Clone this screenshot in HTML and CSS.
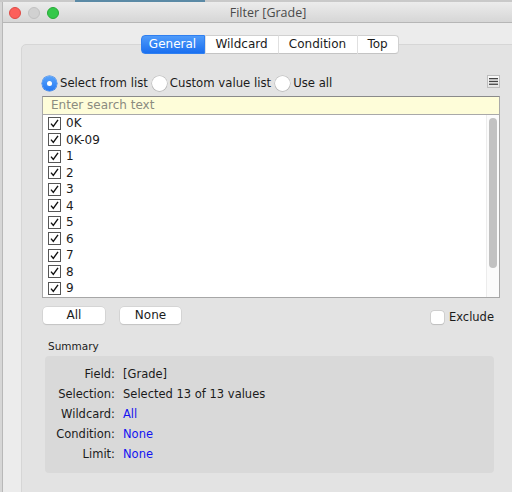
FILE: index.html
```html
<!DOCTYPE html>
<html>
<head>
<meta charset="utf-8">
<link rel="stylesheet" href="styles.css">
</head>
<body>
<div class="topstrip"><div class="peek"></div></div>
<div class="window">
  <div class="titlebar">
    <div class="lights">
      <span class="light red"></span>
      <span class="light gray"></span>
      <span class="light green"></span>
    </div>
    <div class="title">Filter [Grade]</div>
  </div>
  <div class="content">
    <div class="tabs">
      <div class="tab active t-general">General</div>
      <div class="tab t-wild">Wildcard</div>
      <div class="tab t-cond">Condition</div>
      <div class="tab t-top">Top</div>
    </div>
    <div class="panel">
      <div class="radiorow">
        <label class="radio"><span class="dot on"></span>Select from list</label>
        <label class="radio"><span class="dot"></span>Custom value list</label>
        <label class="radio"><span class="dot"></span>Use all</label>
        <span class="menu"><svg width="9" height="7" viewBox="0 0 9 7"><rect x="0" y="0" width="9" height="1.3" fill="#444"/><rect x="0" y="2.8" width="9" height="1.3" fill="#444"/><rect x="0" y="5.6" width="9" height="1.3" fill="#444"/></svg></span>
      </div>
      <div class="search">Enter search text</div>
      <div class="list">
        <div class="items">
          <div class="item"><span class="cb"><svg width="11" height="11" viewBox="0 0 11 11"><path d="M2 5.6 L4.3 8.4 L9 1.8" fill="none" stroke="#111" stroke-width="1.4"/></svg></span>0K</div>
          <div class="item"><span class="cb"><svg width="11" height="11" viewBox="0 0 11 11"><path d="M2 5.6 L4.3 8.4 L9 1.8" fill="none" stroke="#111" stroke-width="1.4"/></svg></span>0K-09</div>
          <div class="item"><span class="cb"><svg width="11" height="11" viewBox="0 0 11 11"><path d="M2 5.6 L4.3 8.4 L9 1.8" fill="none" stroke="#111" stroke-width="1.4"/></svg></span>1</div>
          <div class="item"><span class="cb"><svg width="11" height="11" viewBox="0 0 11 11"><path d="M2 5.6 L4.3 8.4 L9 1.8" fill="none" stroke="#111" stroke-width="1.4"/></svg></span>2</div>
          <div class="item"><span class="cb"><svg width="11" height="11" viewBox="0 0 11 11"><path d="M2 5.6 L4.3 8.4 L9 1.8" fill="none" stroke="#111" stroke-width="1.4"/></svg></span>3</div>
          <div class="item"><span class="cb"><svg width="11" height="11" viewBox="0 0 11 11"><path d="M2 5.6 L4.3 8.4 L9 1.8" fill="none" stroke="#111" stroke-width="1.4"/></svg></span>4</div>
          <div class="item"><span class="cb"><svg width="11" height="11" viewBox="0 0 11 11"><path d="M2 5.6 L4.3 8.4 L9 1.8" fill="none" stroke="#111" stroke-width="1.4"/></svg></span>5</div>
          <div class="item"><span class="cb"><svg width="11" height="11" viewBox="0 0 11 11"><path d="M2 5.6 L4.3 8.4 L9 1.8" fill="none" stroke="#111" stroke-width="1.4"/></svg></span>6</div>
          <div class="item"><span class="cb"><svg width="11" height="11" viewBox="0 0 11 11"><path d="M2 5.6 L4.3 8.4 L9 1.8" fill="none" stroke="#111" stroke-width="1.4"/></svg></span>7</div>
          <div class="item"><span class="cb"><svg width="11" height="11" viewBox="0 0 11 11"><path d="M2 5.6 L4.3 8.4 L9 1.8" fill="none" stroke="#111" stroke-width="1.4"/></svg></span>8</div>
          <div class="item"><span class="cb"><svg width="11" height="11" viewBox="0 0 11 11"><path d="M2 5.6 L4.3 8.4 L9 1.8" fill="none" stroke="#111" stroke-width="1.4"/></svg></span>9</div>
        </div>
        <div class="track"><div class="thumb"></div></div>
      </div>
      <div class="btnrow">
        <div class="btn b-all">All</div>
        <div class="btn b-none">None</div>
        <div class="spacer"></div>
        <label class="exclude"><span class="cb2"></span>Exclude</label>
      </div>
      <div class="sumlabel">Summary</div>
      <div class="summary">
        <div class="k">Field:</div><div class="v">[Grade]</div>
        <div class="k">Selection:</div><div class="v">Selected 13 of 13 values</div>
        <div class="k">Wildcard:</div><div class="v link">All</div>
        <div class="k">Condition:</div><div class="v link">None</div>
        <div class="k">Limit:</div><div class="v link">None</div>
      </div>
    </div>
  </div>
</div>
</body>
</html>
```
FILE: styles.css
```css
html, body {
  margin: 0;
  padding: 0;
  width: 512px;
  height: 492px;
  overflow: hidden;
}
body {
  background: #d6d6d6;
  font-family: "DejaVu Sans", "Liberation Sans", sans-serif;
  font-size: 12px;
  color: #1b1b1b;
}
.topstrip {
  height: 2px;
  background: #c9c9c9;
}
.peek {
  margin-left: 75px;
  width: 130px;
  height: 2px;
  background: #5b8aa6;
}
.window {
  margin-left: 3px;
  width: 530px;
  height: 490px;
  background: #ececec;
  box-shadow: -1px 0 0 #b8b8b8;
}
.titlebar {
  height: 20px;
  background: linear-gradient(#ececec, #d6d6d6);
  border-bottom: 1px solid #b6b6b6;
  display: flex;
  align-items: center;
  position: relative;
}
.lights {
  display: flex;
  gap: 7px;
  padding-left: 6px;
  padding-top: 1px;
}
.light {
  width: 12px;
  height: 12px;
  border-radius: 50%;
  box-sizing: border-box;
}
.red { background: #fc605b; border: 1px solid #de4a45; }
.gray { background: #d1d1d1; border: 1px solid #c1c1c1; }
.green { background: #34c84a; border: 1px solid #27aa36; }
.title {
  position: absolute;
  left: 0;
  right: 0;
  top: 1px;
  text-align: center;
  font-family: "Open Sans", "Liberation Sans", sans-serif;
  font-size: 12.5px;
  color: #4a4a4a;
  line-height: 20px;
}
.content {
  padding: 12px 15px 0 18px;
}
.tabs {
  display: flex;
  justify-content: center;
  position: relative;
  z-index: 1;
  height: 19px;
  margin-bottom: -10px;
}
.tab {
  background: #ffffff;
  border-top: 1px solid #d0d0d0;
  border-bottom: 1px solid #c4c4c4;
  border-left: 1px solid #e0e0e0;
  box-sizing: border-box;
  height: 19px;
  line-height: 17px;
  text-align: center;
  font-size: 12px;
  color: #1b1b1b;
}
.tab.active {
  background: linear-gradient(#4f9bfa, #1a6ff0);
  color: #fff;
  border: 1px solid #2f7ff0;
  border-radius: 4px 0 0 4px;
}
.t-general { width: 64px; }
.t-wild { width: 73px; }
.t-cond { width: 79px; }
.t-top { width: 42px; border-right: 1px solid #d0d0d0; border-radius: 0 4px 4px 0; }
.panel {
  background: #e3e3e3;
  border: 1px solid #d6d6d6;
  border-radius: 5px;
  height: 460px;
  padding: 21px 17px 0 20px;
  box-sizing: border-box;
}
.radiorow {
  display: flex;
  align-items: center;
  height: 16px;
  margin-top: 9px;
  font-size: 11.7px;
}
.radio {
  display: flex;
  align-items: center;
  margin-right: 4px;
  white-space: nowrap;
}
.dot {
  width: 15px;
  height: 15px;
  border-radius: 50%;
  background: #fff;
  box-shadow: 0 0 0 0.5px #b5b5b5, 0 0.5px 1px rgba(0,0,0,0.2);
  margin-right: 3px;
  box-sizing: border-box;
  display: flex;
  align-items: center;
  justify-content: center;
}
.dot.on {
  background: linear-gradient(#5aa4fb, #2379f3);
  box-shadow: 0 0 0 0.5px #2c7ae8;
}
.dot.on::after {
  content: "";
  width: 5px;
  height: 5px;
  border-radius: 50%;
  background: #fff;
}
.menu {
  margin-left: auto;
  width: 13px;
  height: 13px;
  box-sizing: border-box;
  border: 1px solid #bdbdbd;
  background: linear-gradient(#fafafa, #e6e6e6);
  display: flex;
  align-items: center;
  justify-content: center;
  margin-top: -4px;
}
.search {
  margin-top: 5px;
  height: 19px;
  box-sizing: border-box;
  background: #fefdd9;
  border: 1px solid #a9a9a9;
  border-top-color: #8a8a8a;
  color: #8b8b80;
  padding-left: 8px;
  line-height: 17px;
}
.list {
  height: 183px;
  box-sizing: border-box;
  background: #fff;
  border: 1px solid #a7a7a7;
  border-top: none;
  display: flex;
}
.items {
  flex: 1;
  padding-left: 5px;
}
.item {
  height: 16.5px;
  display: flex;
  align-items: center;
  font-size: 12px;
}
.cb {
  width: 13px;
  height: 13px;
  box-sizing: border-box;
  border: 1px solid #555;
  background: #fff;
  margin-right: 5px;
  display: flex;
  align-items: center;
  justify-content: center;
}
.track {
  width: 13px;
  border-left: 1px solid #ececec;
  background: #fbfbfb;
  padding: 3px 0 0 2px;
  box-sizing: border-box;
}
.thumb {
  width: 8px;
  height: 150px;
  border-radius: 4px;
  background: #c2c2c2;
}
.btnrow {
  display: flex;
  align-items: center;
  margin-top: 8px;
  height: 18px;
}
.btn {
  height: 17px;
  box-sizing: border-box;
  background: #fff;
  border-radius: 4px;
  box-shadow: 0 0 0 0.5px #c8c8c8, 0 1px 1px rgba(0,0,0,0.15);
  text-align: center;
  line-height: 17px;
  font-size: 12px;
}
.b-all { width: 62px; margin-left: 1px; }
.b-none { width: 61px; margin-left: 15px; }
.spacer { flex: 1; }
.exclude {
  display: flex;
  align-items: center;
  margin-right: 6px;
  margin-top: 4px;
  font-size: 11.5px;
}
.cb2 {
  width: 13px;
  height: 13px;
  border-radius: 3px;
  background: #fff;
  box-shadow: 0 0 0 0.5px #bdbdbd, 0 0.5px 1px rgba(0,0,0,0.15);
  margin-right: 5px;
}
.sumlabel {
  font-size: 10.5px;
  margin-top: 15px;
  padding-left: 6px;
  height: 14px;
  line-height: 14px;
}
.summary {
  margin-top: 3px;
  margin-left: 3px;
  margin-right: 6px;
  height: 117px;
  box-sizing: border-box;
  background: #d9d9d9;
  border-radius: 4px;
  padding-top: 8px;
  display: grid;
  grid-template-columns: 70px 1fr;
  grid-auto-rows: 20px;
  column-gap: 8px;
  align-items: center;
  font-size: 11.5px;
}
.k { text-align: right; }
.v.link { color: #1414f0; }
```
